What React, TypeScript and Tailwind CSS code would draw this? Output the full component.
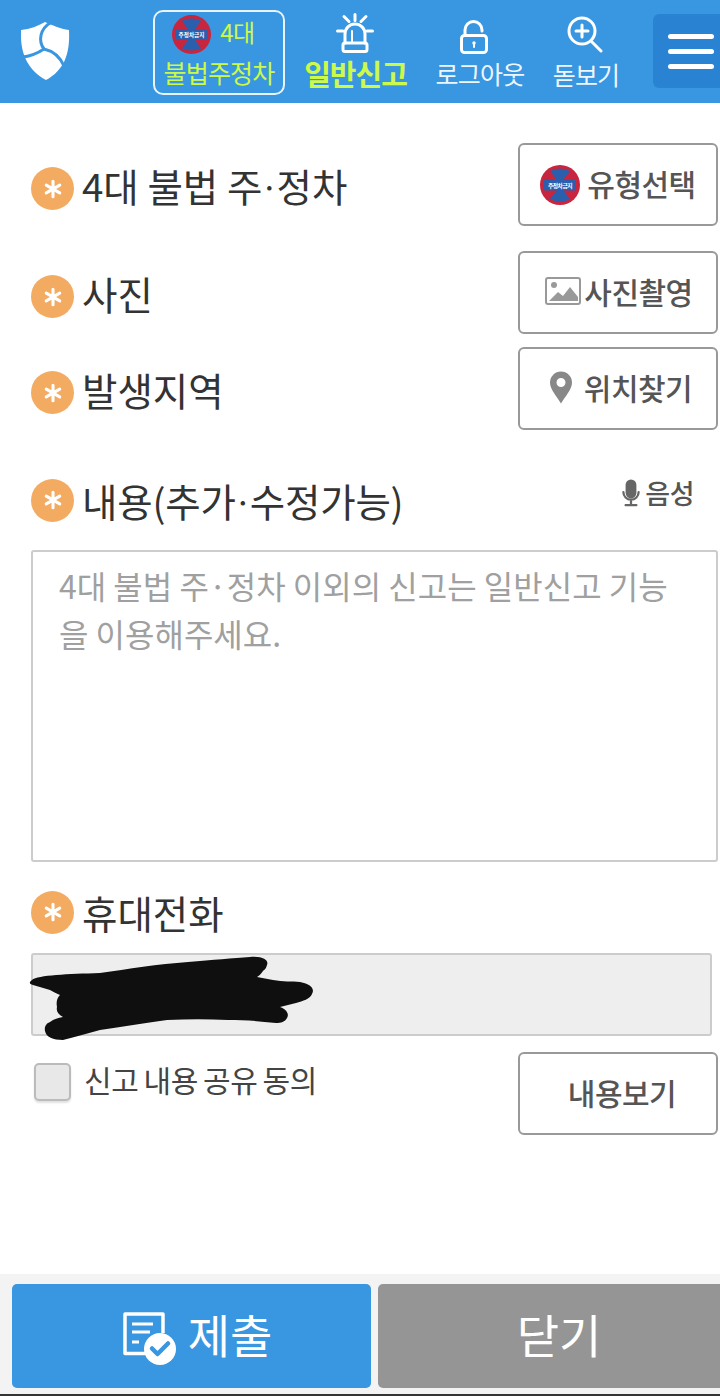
const font = "font-['Noto_Sans_CJK_KR','Noto_Sans',sans-serif]";

function NoParking({ size, fs, className = "" }: { size: number; fs: number; className?: string }) {
  return (
    <svg width={size} height={size} viewBox="0 0 40 40" className={`shrink-0 ${className}`}>
      <circle cx="20" cy="20" r="20" fill="#c8253f" />
      <path d="M10 6 Q20 1 30 6 L23 15 H17 Z M10 34 Q20 39 30 34 L23 25 H17 Z" fill="#2a5fae" />
      <rect x="4" y="14.500" width="32" height="11" rx="1" fill="#2a5fae" />
      <text x="20" y="22.500" textAnchor="middle" fontSize={fs} fontWeight="700" fill="#fff" fontFamily="Noto Sans CJK KR, sans-serif">주정차금지</text>
    </svg>
  );
}

function Asterisk({ shift }: { shift: boolean }) {
  return (
    <span className={`flex h-[43px] w-[43px] shrink-0 items-center justify-center rounded-full bg-[#f3ab62] ${shift ? "mt-[8px]" : ""}`}>
      <svg width="20" height="20" viewBox="0 0 22 22" stroke="#fff" strokeWidth="3.400" strokeLinecap="round">
        <path d="M11 2.500v17M3.600 6.700l14.800 8.600M18.400 6.700 3.600 15.300" />
      </svg>
    </span>
  );
}

function Label({ text, shift = false, tight = false }: { text: string; shift?: boolean; tight?: boolean }) {
  const parts = text.split("·");
  return (
    <div className="flex items-center gap-2">
      <Asterisk shift={shift} />
      <span className={`whitespace-nowrap text-[38.5px] leading-[44px] text-[#333] ${tight ? "tracking-[-0.2px]" : ""}`}>
        {parts.map((part, i) => (
          <span key={part}>
            {i > 0 && <span className="relative top-[-5px] text-[24px] font-bold leading-none">·</span>}
            {part}
          </span>
        ))}
      </span>
    </div>
  );
}

function ActionButton({ children, className = "" }: { children: React.ReactNode; className?: string }) {
  return (
    <div className={`flex h-[83px] w-[200px] shrink-0 items-center justify-center rounded-[6px] border-2 border-[#999] bg-white pb-[3px] text-[30px] font-medium tracking-[-0.5px] text-[#555] ${className}`}>
      {children}
    </div>
  );
}

export default function App() {
  return (
    <div className={`flex h-[1396px] w-[720px] flex-col overflow-hidden bg-white ${font}`}>
      <header className="flex h-[103px] shrink-0 items-start bg-[#3996e0]">
        <div className="ml-[21px] mt-[21px] w-[49px] shrink-0">
          <svg width="49" height="60" viewBox="0 0 49 60">
            <path d="M0 9 C9 8 17 5 24 1 C31 4 39 8 48 9 C49 30 45 48 25 59 C5 48 -1 30 0 9 Z" fill="#fff" />
            <path d="M29 2 C19 8 17 20 23 28 C17 32 10 35 2 36" fill="none" stroke="#3996e0" strokeWidth="3" />
            <path d="M23 28 C32 30 39 36 43 45" fill="none" stroke="#3996e0" strokeWidth="3" />
          </svg>
        </div>

        <div className="ml-[83px] mt-[10px] flex h-[85px] w-[132px] shrink-0 flex-col items-center rounded-[10px] border-2 border-[#e8f4fc]">
          <div className="mt-[2px] flex h-[40px] items-center gap-[9px] pr-[11px]">
            <NoParking size={39} fs={5.800} />
            <span className="pb-[4px] text-[24px] leading-[36px] tracking-[-0.5px] text-[#ccf94a]">4대</span>
          </div>
          <span className="text-[25px] leading-[36px] tracking-[-0.8px] text-[#ccf94a]">불법주정차</span>
        </div>

        <div className="ml-[19px] mt-[13px] flex w-[103px] shrink-0 flex-col items-center">
          <svg width="40" height="40" viewBox="0 0 40 40" fill="none" stroke="#fff" strokeWidth="3" strokeLinecap="round" strokeLinejoin="round">
            <path d="M19 1.500v6M8 3.500l5 5M30 3.500l-5 5M1.500 18h5.500M31 18h5.500" />
            <path d="M9 30V21a10 10 0 0 1 20 0v9" />
            <path d="M16 18v11" strokeWidth="2" />
            <rect x="7" y="30" width="24" height="8.500" rx="2" />
          </svg>
          <span className="whitespace-nowrap text-[29px] font-bold leading-[40px] tracking-[-1px] text-[#ccf94a]">일반신고</span>
        </div>

        <div className="ml-[29px] mt-[20px] flex w-[88px] shrink-0 flex-col items-center">
          <svg width="28" height="34" viewBox="0 0 28 34" fill="none" stroke="#fff" strokeWidth="3" strokeLinecap="round" className="mr-[13px]">
            <path d="M5 15V10a8.500 8.500 0 0 1 17 0v1" />
            <rect x="1.500" y="15.500" width="25" height="17" rx="3" />
            <circle cx="14" cy="23" r="1" fill="#fff" strokeWidth="1.500" />
            <path d="M14 24v3" strokeWidth="2" />
          </svg>
          <span className="mt-[1px] whitespace-nowrap text-[25px] leading-[36px] tracking-[-0.8px] text-[#eef6fd]">로그아웃</span>
        </div>

        <div className="ml-[29px] mt-[16px] flex w-[66px] shrink-0 flex-col items-center">
          <svg width="36" height="37" viewBox="0 0 36 37" fill="none" stroke="#fff" strokeWidth="3" strokeLinecap="round" className="mr-[3px]">
            <circle cx="15" cy="15" r="13" />
            <path d="M15 9v12M9 15h12M25 26l9 9" />
          </svg>
          <span className="mt-[3px] whitespace-nowrap text-[25px] leading-[36px] tracking-[-0.8px] text-[#eef6fd]">돋보기</span>
        </div>

        <div className="ml-[34px] mt-[14px] flex h-[74px] flex-1 flex-col justify-center gap-[10px] rounded-l-[6px] bg-[#2a83d2] pl-[15px]">
          <span className="h-[5px] w-[46px] rounded-full bg-white" />
          <span className="h-[5px] w-[46px] rounded-full bg-white" />
          <span className="h-[5px] w-[46px] rounded-full bg-white" />
        </div>
      </header>

      <main className="flex flex-1 flex-col pl-[31px] pr-[2px] pt-[40px]">
        <div className="flex items-center justify-between">
          <Label text="4대 불법 주·정차" shift />
          <ActionButton className="gap-[7px]">
            <NoParking size={40} fs={5.800} className="mt-[3px]" />
            <span>유형선택</span>
          </ActionButton>
        </div>

        <div className="mt-[25px] flex items-center justify-between">
          <Label text="사진" shift />
          <ActionButton className="gap-[3px] pl-[2px]">
            <svg width="36" height="28" viewBox="0 0 36 28">
              <rect x="1" y="1" width="34" height="26" rx="2" fill="none" stroke="#999" strokeWidth="2" />
              <circle cx="9" cy="8" r="3" fill="#999" />
              <path d="M4 24l9-9 5 4 7-9 8 10v4z" fill="#999" />
            </svg>
            <span>사진촬영</span>
          </ActionButton>
        </div>

        <div className="mt-[13px] flex items-center justify-between">
          <Label text="발생지역" shift />
          <ActionButton className="gap-[12px] pl-[6px]">
            <svg width="22" height="33" viewBox="0 0 22 32">
              <path fillRule="evenodd" d="M11 0a11 11 0 0 1 11 11c0 7-7 14-11 21C7 25 0 18 0 11A11 11 0 0 1 11 0Zm0 6.500a4.500 4.500 0 1 0 0 9 4.500 4.500 0 0 0 0-9Z" fill="#888" />
            </svg>
            <span>위치찾기</span>
          </ActionButton>
        </div>

        <div className="mt-[48px] flex items-start justify-between pr-[24px]">
          <Label text="내용(추가·수정가능)" tight />
          <div className="mt-[-5px] flex items-center gap-[5px] text-[27px] font-medium tracking-[-0.5px] text-[#555]">
            <svg width="18" height="30" viewBox="0 0 20 30" fill="none">
              <rect x="4" y="0" width="12" height="21" rx="6" fill="#666" />
              <path d="M1.500 14a8.500 8.500 0 0 0 17 0M10 23v5M4 28.500h12" stroke="#666" strokeWidth="2.500" strokeLinecap="round" />
            </svg>
            <span>음성</span>
          </div>
        </div>

        <div className="mt-[28px] h-[312px] break-all rounded-[3px] border-2 border-[#ccc] px-[26px] pt-[9px] text-[32px] leading-[48px] text-[#a0a0a0]">
          4대 불법 주·정차 이외의 신고는 일반신고 기능을 이용해주세요.
        </div>

        <div className="mt-[28px]">
          <Label text="휴대전화" />
        </div>

        <div className="relative mr-[6px] mt-[19px] h-[83px] rounded-[3px] border-2 border-[#ccc] bg-[#eeeeee]">
          <svg width="290" height="90" viewBox="0 0 290 90" className="absolute left-[-5px] top-0" fill="#0f0f0f">
            <path d="M4 25 C10 20 40 19 72 18 C100 14 130 9 160 7 C185 5 205 3 222 2 C236 1 241 6 239 10 C238 14 236 15 235 16 C233 19 231 21 229 22 L245 25 C255 27 264 26 272 27 C283 29 287 34 284 39 C282 44 275 46 268 48 L252 52 C260 55 261 60 259 63 C257 67 253 68 248 68 C230 66 215 65 200 65 C180 64 160 64 139 65 C115 68 95 72 72 75 C60 78 48 82 35 85 C25 85 18 82 17 76 C16 71 19 68 22 67 C26 64 30 63 35 62 C30 59 28 56 29 52 C28 47 29 43 32 40 C28 38 25 37 22 35 L5 30 C1 29 1 27 4 25 Z" />
          </svg>
        </div>

        <div className="mt-[16px] flex justify-between">
          <div className="flex items-start">
            <span className="ml-[3px] mt-[11px] h-[38px] w-[37px] rounded-[5px] border-2 border-[#bbb] bg-[#e8e8e8] shadow-[0_2px_2px_rgba(0,0,0,0.12)]" />
            <span className="ml-[13px] mt-[5px] text-[30px] leading-[44px] tracking-[-0.3px] [word-spacing:-1.500px] text-[#444]">신고 내용 공유 동의</span>
          </div>
          <ActionButton className="pl-[8px]">내용보기</ActionButton>
        </div>
      </main>

      <footer className="flex h-[122px] shrink-0 gap-[7px] border-b-2 border-[#333] bg-[#f3f3f3] pl-[12px] pt-[10px]">
        <div className="flex h-[104px] w-[359px] items-center justify-center gap-[11px] rounded-[5px] bg-[#3996e0] pl-[12px]">
          <svg width="54" height="54" viewBox="0 0 54 54" fill="none" className="mt-[6px]">
            <path d="M22 41.500H2V2h38v19" stroke="#fff" strokeWidth="3.500" strokeLinejoin="round" />
            <path d="M9 12h21M9 20h18M9 30h7" stroke="#fff" strokeWidth="3" />
            <circle cx="37" cy="37" r="16" fill="#fff" />
            <path d="M29 36.500l5.500 5.500L45 31.500" stroke="#3996e0" strokeWidth="4.500" strokeLinecap="round" strokeLinejoin="round" />
          </svg>
          <span className="pb-[6px] text-[46px] font-normal leading-none text-white">제출</span>
        </div>
        <div className="flex h-[104px] flex-1 items-center justify-center rounded-l-[5px] bg-[#959595] pl-[20px]">
          <span className="pb-[6px] text-[46px] font-normal leading-none text-white">닫기</span>
        </div>
      </footer>
    </div>
  );
}
